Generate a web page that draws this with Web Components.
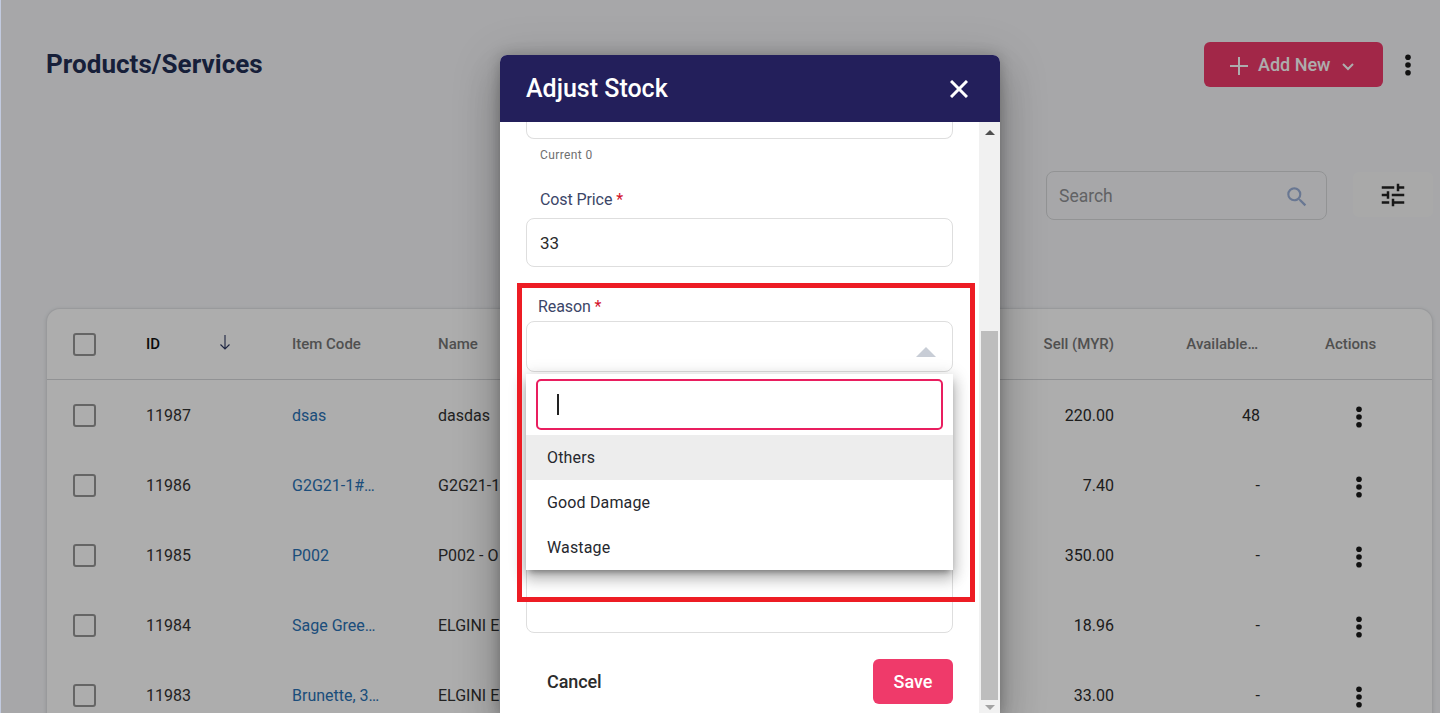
<!DOCTYPE html>
<html>
<head>
<meta charset="utf-8">
<title>Products/Services</title>
<style>
  html, body { margin: 0; height: 100%; overflow: hidden; }
  body { font-family: Roboto, "Liberation Sans", sans-serif; }
</style>
</head>
<body>
<stock-app></stock-app>

<script>
const KEBAB = `<svg width="8" height="24" viewBox="0 0 8 24"><circle cx="4" cy="4.3" r="2.8"/><circle cx="4" cy="12" r="2.8"/><circle cx="4" cy="19.7" r="2.8"/></svg>`;

class PageHeader extends HTMLElement {
  constructor() {
    super();
    this.attachShadow({mode: 'open'}).innerHTML = `
      <style>
        :host { display: block; padding: 42px 7px 0 45px; color: #222f55; }
        .top { display: flex; justify-content: space-between; align-items: center; }
        h1 { margin: -2px 0 0; font-size: 26px; font-weight: 700; letter-spacing: .05px; }
        .right { display: flex; align-items: center; }
        .add {
          width: 179px; height: 45px; box-sizing: border-box; padding-left: 26px;
          display: flex; align-items: center;
          background: #ef3a6a; border-radius: 6px; color: #fff;
          font-size: 18px; font-weight: 500;
        }
        .add .plus { margin-right: 10px; margin-top: 2px; }
        .add .chev { margin-left: 12px; margin-top: 4px; }
        .more { width: 50px; display: flex; justify-content: center; fill: #1a1a1a; }
        .tools { display: flex; justify-content: flex-end; align-items: flex-start; margin-top: 84px; }
        .search {
          width: 281px; height: 49px; box-sizing: border-box; padding: 0 20px 0 12px;
          display: flex; align-items: center; justify-content: space-between;
          border: 1px solid #d8d9db; border-radius: 8px;
          color: #8f9194; font-size: 17.5px;
        }
        .search svg { fill: #9bb0d8; margin-right: -4px; margin-top: 3px; }
        .filter {
          width: 80px; height: 45px; margin: 1px 0 0 26px; border-radius: 6px;
          display: flex; align-items: center; justify-content: center;
          background: #fafafa; fill: #222;
        }
      </style>
      <div class="top">
        <h1>Products/Services</h1>
        <div class="right">
          <div class="add">
            <svg class="plus" width="18" height="18" viewBox="0 0 18 18" stroke="#fff" stroke-width="2"><path d="M0 9h18M9 0v18"/></svg>
            Add New
            <svg class="chev" width="12" height="8" viewBox="0 0 12 8" fill="none" stroke="#fff" stroke-width="2"><path d="M1 1l5 5 5-5"/></svg>
          </div>
          <div class="more">${KEBAB}</div>
        </div>
      </div>
      <div class="tools">
        <div class="search">
          Search
          <svg width="26" height="26" viewBox="0 0 24 24"><path d="M15.5 14h-.79l-.28-.27A6.471 6.471 0 0 0 16 9.5 6.5 6.5 0 1 0 9.5 16c1.61 0 3.09-.59 4.23-1.57l.27.28v.79l5 4.99L20.49 19l-4.99-5zm-6 0C7.01 14 5 11.99 5 9.5S7.01 5 9.5 5 14 7.01 14 9.5 11.99 14 9.5 14z"/></svg>
        </div>
        <div class="filter">
          <svg width="30" height="30" viewBox="0 0 24 24"><path d="M3 17v2h6v-2H3zM3 5v2h10V5H3zm10 16v-2h8v-2h-8v-2h-2v6h2zM7 9v2H3v2h4v2h2V9H7zm14 4v-2H11v2h10zm-6-4h2V7h4V5h-4V3h-2v6z"/></svg>
        </div>
      </div>
    `;
  }
}
customElements.define('page-header', PageHeader);

const COLS = `grid-template-columns: 73px 146px 146px 546px 130px 146px 1fr;`;

class StockRow extends HTMLElement {
  constructor() {
    super();
    this.shadowDOM = this.attachShadow({mode: 'open'});
  }
  connectedCallback() {
    const a = n => this.getAttribute(n);
    this.shadowDOM.innerHTML = `
      <style>
        :host { display: grid; ${COLS} height: 70px; align-items: center; font-size: 16px; color: #333; }
        .box { width: 23px; height: 23px; box-sizing: border-box; border: 2px solid #969696; border-radius: 3px; margin-top: 1px; }
        .code { color: #2a72b5; }
        .name { white-space: nowrap; }
        .num { text-align: right; color: #2b2b2b; }
        .act { padding-left: 65px; }
        .act div { width: 70px; display: flex; justify-content: flex-start; padding-left: 30px; margin-top: 3px; fill: #1a1a1a; }
      </style>
      <div class="box"></div>
      <div>${a('item-id')}</div>
      <div class="code">${a('code')}</div>
      <div class="name">${a('name')}</div>
      <div class="num">${a('sell')}</div>
      <div class="num">${a('avail')}</div>
      <div class="act"><div>${KEBAB}</div></div>
    `;
  }
}
customElements.define('stock-row', StockRow);

class StockTable extends HTMLElement {
  constructor() {
    super();
    this.attachShadow({mode: 'open'}).innerHTML = `
      <style>
        :host {
          display: block; margin: 88px 7px 0 45px;
          background: #fff; border: 1px solid #e2e3e6; border-bottom: 0;
          border-radius: 14px 14px 0 0; box-sizing: border-box;
          box-shadow: 0 1px 4px rgba(0,0,0,.12);
        }
        .head {
          display: grid; ${COLS} height: 71px; box-sizing: border-box; padding-left: 26px;
          align-items: center; border-bottom: 1px solid #d6d7da;
          font-size: 15px; font-weight: 500; color: #777;
        }
        .box { width: 23px; height: 23px; box-sizing: border-box; border: 2px solid #969696; border-radius: 3px; }
        .id { color: #111; display: flex; }
        .id svg { margin-left: 59px; }
        .r { text-align: right; }
        .av { padding-right: 2px; }
        .act { padding-left: 65px; }
        .rows { padding-left: 26px; }
      </style>
      <div class="head">
        <div class="box"></div>
        <div class="id">ID<svg width="12" height="15" viewBox="0 0 12 15" fill="none" stroke="#2a3560" stroke-width="1.1"><path d="M6 0v14M1.5 9.5L6 14l4.5-4.5"/></svg></div>
        <div>Item Code</div>
        <div>Name</div>
        <div class="r">Sell (MYR)</div>
        <div class="r av">Available…</div>
        <div class="act">Actions</div>
      </div>
      <div class="rows"><slot></slot></div>
    `;
  }
}
customElements.define('stock-table', StockTable);

class FormField extends HTMLElement {
  constructor() {
    super();
    this.attachShadow({mode: 'open'}).innerHTML = `
      <style>
        :host { display: block; font-size: 16px; line-height: 20px; letter-spacing: -.1px; color: #3c4668; }
        .req { color: #d3122c; }
      </style>
      <slot></slot> <span class="req">*</span>
    `;
  }
}
customElements.define('field-label', FormField);

class ReasonSelect extends HTMLElement {
  constructor() {
    super();
    this.attachShadow({mode: 'open'}).innerHTML = `
      <style>
        :host { display: block; position: relative; }
        .control {
          height: 51px; box-sizing: border-box; border: 1px solid #dedede; border-radius: 8px;
          display: flex; align-items: center; justify-content: flex-end; padding-right: 16px;
        }
        .arrow { width: 0; height: 0; border: 10px solid transparent; border-top: 0; border-bottom-color: #c8cdd6; margin-top: 10px; }
        .panel {
          position: absolute; left: 0; right: 0; top: 53px; z-index: 2;
          background: #fff;
          box-shadow: 0 5px 6px -3px rgba(0,0,0,.35), 0 9px 14px 1px rgba(0,0,0,.2), 0 3px 16px 2px rgba(0,0,0,.14);
        }
        .find { padding: 5px 10px; }
        .find div {
          height: 51px; box-sizing: border-box; border: 2px solid #e91e5f; border-radius: 5px;
          display: flex; align-items: center; padding-left: 19px;
        }
        .find i { display: block; width: 2px; height: 21px; background: #222; }
      </style>
      <div class="control"><div class="arrow"></div></div>
      <div class="panel">
        <div class="find"><div><i></i></div></div>
        <slot></slot>
      </div>
    `;
  }
}
customElements.define('reason-select', ReasonSelect);

class ReasonOption extends HTMLElement {
  constructor() {
    super();
    this.attachShadow({mode: 'open'}).innerHTML = `
      <style>
        :host {
          display: flex; align-items: center; height: 45px; padding-left: 21px;
          font-size: 16px; letter-spacing: .15px; color: #26282e;
        }
        :host([active]) { background: #ededed; }
      </style>
      <slot></slot>
    `;
  }
}
customElements.define('reason-option', ReasonOption);

class AdjustModal extends HTMLElement {
  constructor() {
    super();
    this.attachShadow({mode: 'open'}).innerHTML = `
      <style>
        :host {
          display: flex; flex-direction: column; position: relative;
          width: 500px; height: 658px; background: #fff; border-radius: 7px 7px 0 0;
          box-shadow: 0 0 14px rgba(0,0,0,.2), 0 11px 15px -7px rgba(0,0,0,.2), 0 24px 38px 3px rgba(0,0,0,.14), 0 9px 46px 8px rgba(0,0,0,.12);
        }
        header {
          height: 67px; flex: none; display: flex; align-items: center; justify-content: space-between;
          padding: 0 32px 0 26px; background: #231f5b; border-radius: 7px 7px 0 0;
          color: #fff; font-size: 25px; font-weight: 500;
        }
        .body { flex: 1; display: flex; min-height: 0; }
        .form { flex: 1; padding: 0 26px; }
        .input { box-sizing: border-box; border: 1px solid #dedede; border-radius: 8px; }
        .stub { height: 17px; border-top: 0; border-radius: 0 0 8px 8px; }
        .hint { margin: 8px 0 0 14px; font-size: 12px; line-height: 16px; letter-spacing: .4px; color: #6f6f6f; }
        .label1 { margin: 27px 0 0 14px; }
        .cost { height: 49px; margin-top: 8px; display: flex; align-items: center; padding-left: 13px; font-size: 17px; color: #2b2b2b; }
        .label2 { margin: 30px 0 4px 12px; }
        .area { height: 113px; margin-top: 148px; }
        .actions { display: flex; justify-content: space-between; align-items: center; margin-top: 26px; padding-left: 21px; font-size: 18px; font-weight: 500; color: #2b2b2b; }
        .actions span { letter-spacing: -.1px; }
        .save { width: 80px; height: 45px; display: flex; align-items: center; justify-content: center; border-radius: 6px; background: #ef3a6a; color: #fff; }
        .bar { width: 21px; flex: none; background: #f1f1f1; display: flex; flex-direction: column; align-items: center; box-sizing: border-box; padding-right: 0; }
        .up { width: 0; height: 0; margin-top: 8px; border: 5px solid transparent; border-top: 0; border-bottom: 5px solid #505050; }
        .thumb { width: 17px; height: 369px; margin-top: 196px; background: #bdbdbd; }
        .down { width: 0; height: 0; margin-top: 5px; border: 5px solid transparent; border-bottom: 0; border-top: 5px solid #a3a3a3; }
        .mark { position: absolute; left: 17px; top: 228px; width: 458px; height: 319px; box-sizing: border-box; border: 5px solid #ed1c24; z-index: 3; }
      </style>
      <header>
        Adjust Stock
        <svg width="18" height="18" viewBox="0 0 18 18" stroke="#fff" stroke-width="3"><path d="M1 1l16 16M17 1L1 17"/></svg>
      </header>
      <div class="body">
        <div class="form">
          <div class="input stub"></div>
          <div class="hint">Current 0</div>
          <field-label class="label1">Cost Price</field-label>
          <div class="input cost">33</div>
          <field-label class="label2">Reason</field-label>
          <slot></slot>
          <div class="input area"></div>
          <div class="actions"><span>Cancel</span><div class="save">Save</div></div>
        </div>
        <div class="bar"><div class="up"></div><div class="thumb"></div><div class="down"></div></div>
      </div>
      <div class="mark"></div>
    `;
  }
}
customElements.define('adjust-modal', AdjustModal);

class StockApp extends HTMLElement {
  constructor() {
    super();
    this.attachShadow({mode: 'open'}).innerHTML = `
      <style>
        :host { display: block; position: relative; height: 100vh; overflow: hidden; background: #c2cadf; }
        .page { margin-left: 1px; height: 100%; background: #f6f7fa; overflow: hidden; }
        .overlay {
          position: absolute; top: 0; bottom: 0; left: 1px; right: 0;
          background: rgba(0,0,0,.32);
          display: flex; padding: 55px 0 0 499px; box-sizing: border-box;
        }
      </style>
      <div class="page">
        <page-header></page-header>
        <stock-table>
          <stock-row item-id="11987" code="dsas" name="dasdas" sell="220.00" avail="48"></stock-row>
          <stock-row item-id="11986" code="G2G21-1#…" name="G2G21-1" sell="7.40" avail="-"></stock-row>
          <stock-row item-id="11985" code="P002" name="P002 - O" sell="350.00" avail="-"></stock-row>
          <stock-row item-id="11984" code="Sage Gree…" name="ELGINI E" sell="18.96" avail="-"></stock-row>
          <stock-row item-id="11983" code="Brunette, 3…" name="ELGINI E" sell="33.00" avail="-"></stock-row>
        </stock-table>
      </div>
      <div class="overlay">
        <adjust-modal>
          <reason-select>
            <reason-option active>Others</reason-option>
            <reason-option>Good Damage</reason-option>
            <reason-option>Wastage</reason-option>
          </reason-select>
        </adjust-modal>
      </div>
    `;
  }
}
customElements.define('stock-app', StockApp);
</script>
</body>
</html>
